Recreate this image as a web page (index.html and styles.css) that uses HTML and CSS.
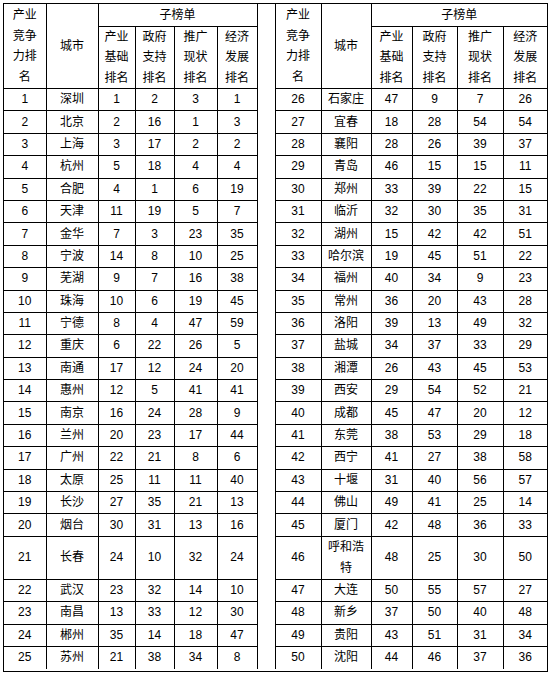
FILE: index.html
```html
<!DOCTYPE html>
<html lang="zh-CN">
<head>
<meta charset="utf-8">
<title>产业竞争力排名</title>
<link rel="stylesheet" href="styles.css">
</head>
<body>
<div class="page">
<div class="frame">
<table class="rank">
<colgroup>
<col class="c-rank-l"><col class="c-city-l"><col class="c-a-l"><col class="c-b-l"><col class="c-c-l"><col class="c-d-l">
<col class="c-gap">
<col class="c-rank-r"><col class="c-city-r"><col class="c-a-r"><col class="c-b-r"><col class="c-c-r"><col class="c-d-r">
</colgroup>
<tr class="h1">
<td class="hd first" rowspan="2">产业<br>竞争<br>力排<br>名</td>
<td class="hd" rowspan="2">城市</td>
<td class="hd" colspan="4">子榜单</td>
<td class="gap" rowspan="27"></td>
<td class="hd" rowspan="2">产业<br>竞争<br>力排<br>名</td>
<td class="hd" rowspan="2">城市</td>
<td class="hd last" colspan="4">子榜单</td>
</tr>
<tr class="h2">
<td class="hd">产业<br>基础<br>排名</td>
<td class="hd">政府<br>支持<br>排名</td>
<td class="hd">推广<br>现状<br>排名</td>
<td class="hd">经济<br>发展<br>排名</td>
<td class="hd">产业<br>基础<br>排名</td>
<td class="hd">政府<br>支持<br>排名</td>
<td class="hd">推广<br>现状<br>排名</td>
<td class="hd last">经济<br>发展<br>排名</td>
</tr>
<tr class="r"><td class="first">1</td><td>深圳</td><td>1</td><td>2</td><td>3</td><td>1</td><td>26</td><td>石家庄</td><td>47</td><td>9</td><td>7</td><td class="last">26</td></tr>
<tr class="r"><td class="first">2</td><td>北京</td><td>2</td><td>16</td><td>1</td><td>3</td><td>27</td><td>宜春</td><td>18</td><td>28</td><td>54</td><td class="last">54</td></tr>
<tr class="r"><td class="first">3</td><td>上海</td><td>3</td><td>17</td><td>2</td><td>2</td><td>28</td><td>襄阳</td><td>28</td><td>26</td><td>39</td><td class="last">37</td></tr>
<tr class="r"><td class="first">4</td><td>杭州</td><td>5</td><td>18</td><td>4</td><td>4</td><td>29</td><td>青岛</td><td>46</td><td>15</td><td>15</td><td class="last">11</td></tr>
<tr class="r"><td class="first">5</td><td>合肥</td><td>4</td><td>1</td><td>6</td><td>19</td><td>30</td><td>郑州</td><td>33</td><td>39</td><td>22</td><td class="last">15</td></tr>
<tr class="r"><td class="first">6</td><td>天津</td><td>11</td><td>19</td><td>5</td><td>7</td><td>31</td><td>临沂</td><td>32</td><td>30</td><td>35</td><td class="last">31</td></tr>
<tr class="r"><td class="first">7</td><td>金华</td><td>7</td><td>3</td><td>23</td><td>35</td><td>32</td><td>湖州</td><td>15</td><td>42</td><td>42</td><td class="last">51</td></tr>
<tr class="r"><td class="first">8</td><td>宁波</td><td>14</td><td>8</td><td>10</td><td>25</td><td>33</td><td>哈尔滨</td><td>19</td><td>45</td><td>51</td><td class="last">22</td></tr>
<tr class="r"><td class="first">9</td><td>芜湖</td><td>9</td><td>7</td><td>16</td><td>38</td><td>34</td><td>福州</td><td>40</td><td>34</td><td>9</td><td class="last">23</td></tr>
<tr class="r"><td class="first">10</td><td>珠海</td><td>10</td><td>6</td><td>19</td><td>45</td><td>35</td><td>常州</td><td>36</td><td>20</td><td>43</td><td class="last">28</td></tr>
<tr class="r"><td class="first">11</td><td>宁德</td><td>8</td><td>4</td><td>47</td><td>59</td><td>36</td><td>洛阳</td><td>39</td><td>13</td><td>49</td><td class="last">32</td></tr>
<tr class="r"><td class="first">12</td><td>重庆</td><td>6</td><td>22</td><td>26</td><td>5</td><td>37</td><td>盐城</td><td>34</td><td>37</td><td>33</td><td class="last">29</td></tr>
<tr class="r"><td class="first">13</td><td>南通</td><td>17</td><td>12</td><td>24</td><td>20</td><td>38</td><td>湘潭</td><td>26</td><td>43</td><td>45</td><td class="last">53</td></tr>
<tr class="r"><td class="first">14</td><td>惠州</td><td>12</td><td>5</td><td>41</td><td>41</td><td>39</td><td>西安</td><td>29</td><td>54</td><td>52</td><td class="last">21</td></tr>
<tr class="r"><td class="first">15</td><td>南京</td><td>16</td><td>24</td><td>28</td><td>9</td><td>40</td><td>成都</td><td>45</td><td>47</td><td>20</td><td class="last">12</td></tr>
<tr class="r"><td class="first">16</td><td>兰州</td><td>20</td><td>23</td><td>17</td><td>44</td><td>41</td><td>东莞</td><td>38</td><td>53</td><td>29</td><td class="last">18</td></tr>
<tr class="r"><td class="first">17</td><td>广州</td><td>22</td><td>21</td><td>8</td><td>6</td><td>42</td><td>西宁</td><td>41</td><td>27</td><td>38</td><td class="last">58</td></tr>
<tr class="r"><td class="first">18</td><td>太原</td><td>25</td><td>11</td><td>11</td><td>40</td><td>43</td><td>十堰</td><td>31</td><td>40</td><td>56</td><td class="last">57</td></tr>
<tr class="r"><td class="first">19</td><td>长沙</td><td>27</td><td>35</td><td>21</td><td>13</td><td>44</td><td>佛山</td><td>49</td><td>41</td><td>25</td><td class="last">14</td></tr>
<tr class="r"><td class="first">20</td><td>烟台</td><td>30</td><td>31</td><td>13</td><td>16</td><td>45</td><td>厦门</td><td>42</td><td>48</td><td>36</td><td class="last">33</td></tr>
<tr class="tall"><td class="first">21</td><td>长春</td><td>24</td><td>10</td><td>32</td><td>24</td><td>46</td><td>呼和浩<br>特</td><td>48</td><td>25</td><td>30</td><td class="last">50</td></tr>
<tr class="r"><td class="first">22</td><td>武汉</td><td>23</td><td>32</td><td>14</td><td>10</td><td>47</td><td>大连</td><td>50</td><td>55</td><td>57</td><td class="last">27</td></tr>
<tr class="r"><td class="first">23</td><td>南昌</td><td>13</td><td>33</td><td>12</td><td>30</td><td>48</td><td>新乡</td><td>37</td><td>50</td><td>40</td><td class="last">48</td></tr>
<tr class="r"><td class="first">24</td><td>郴州</td><td>35</td><td>14</td><td>18</td><td>47</td><td>49</td><td>贵阳</td><td>43</td><td>51</td><td>31</td><td class="last">34</td></tr>
<tr class="r end"><td class="first">25</td><td>苏州</td><td>21</td><td>38</td><td>34</td><td>8</td><td>50</td><td>沈阳</td><td>44</td><td>46</td><td>37</td><td class="last">36</td></tr>
</table>
</div>
</div>
</body>
</html>
```

FILE: styles.css
```css
html, body {
  margin: 0;
  padding: 0;
  background: #ffffff;
}

.page {
  padding: 3px 0 0 3px;
}

.frame {
  width: 543px;
  border: 1px solid #000;
  padding-bottom: 2px;
}

.rank {
  width: 543px;
  table-layout: fixed;
  border-collapse: collapse;
  font-family: "Liberation Sans", "Noto Sans CJK SC", sans-serif;
  font-size: 12px;
  color: #000;
}

.c-rank-l { width: 42px; }
.c-city-l { width: 52px; }
.c-a-l { width: 37px; }
.c-b-l { width: 39px; }
.c-c-l { width: 43px; }
.c-d-l { width: 40px; }
.c-gap { width: 18px; }
.c-rank-r { width: 46px; }
.c-city-r { width: 50px; }
.c-a-r { width: 41px; }
.c-b-r { width: 45px; }
.c-c-r { width: 46px; }
.c-d-r { width: 44px; }

.rank td {
  border: 1px solid #000;
  padding: 0;
  text-align: center;
  vertical-align: middle;
  line-height: 21px;
  white-space: nowrap;
}

.rank td.hd {
  line-height: 20.5px;
}

.rank .h1 td {
  border-top: none;
}

.rank td.first {
  border-left: none;
}

.rank td.last {
  border-right: none;
}

.rank td.gap {
  border-top: none;
  border-bottom: none;
}

.rank .end td {
  border-bottom: none;
}

.h1 { height: 22px; }
.h2 { height: 62px; }
.r { height: 22.4px; }
.tall { height: 43px; }
```
